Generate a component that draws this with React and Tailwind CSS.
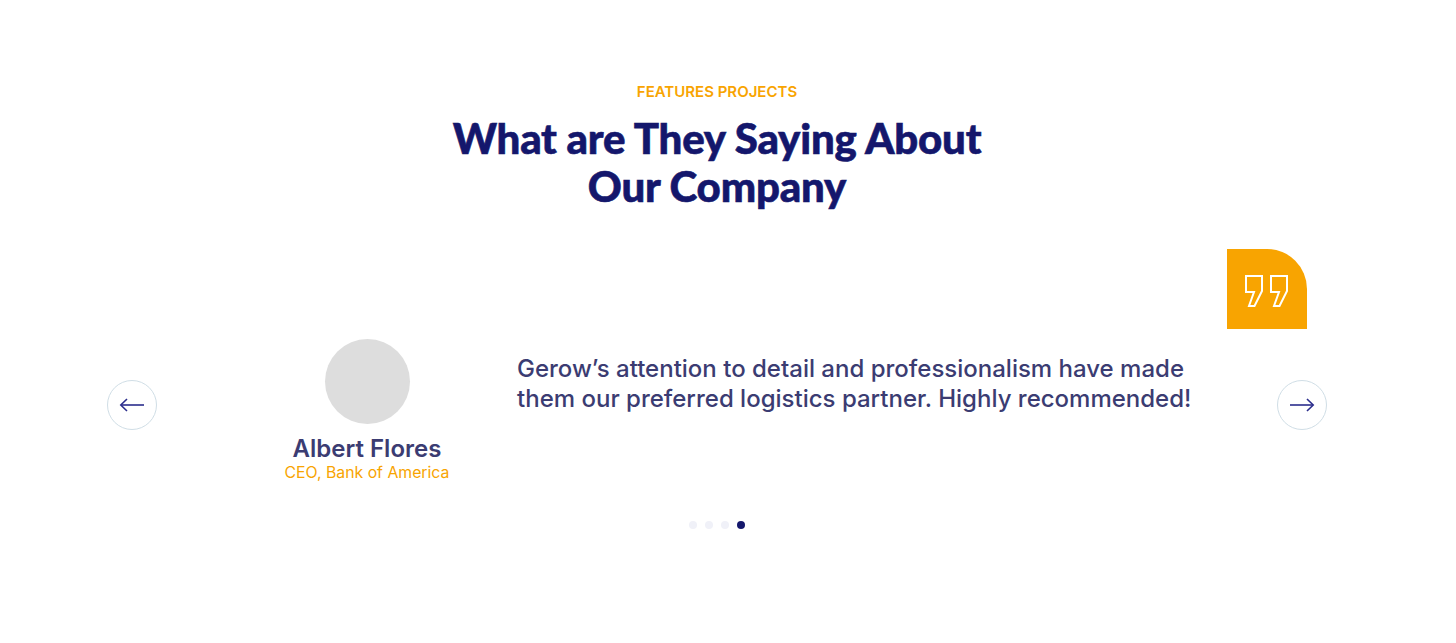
export default function App() {
  const dots = ["bg-[#f0f1f8]", "bg-[#f0f1f8]", "bg-[#f0f1f8]", "bg-[#14176c]"];
  return (
    <div className="h-[643px] w-[1434px] overflow-hidden bg-white pt-[83px] font-['Inter',sans-serif]">
      <div className="flex flex-col items-center">
        <p className="text-[15px] leading-[18px] font-semibold text-[#f8a401]">FEATURES PROJECTS</p>
        <h2 className="mt-[13px] w-[560px] text-center font-['Lato',sans-serif] text-[42px] leading-[48px] font-black tracking-[-0.2px] text-[#14176c] [-webkit-text-stroke:0.6px_#14176c]">
          What are They Saying About
          <br />
          Our Company
        </h2>
      </div>
      <div className="mx-auto mt-[39px] flex w-[1220px] items-start">
        <div className="mt-[131px] flex h-[50px] w-[50px] shrink-0 items-center justify-center rounded-full border border-[#d0dee6]">
          <svg width="26" height="16" viewBox="0 0 26 16" fill="none" stroke="#2b2d8c" strokeWidth="1.6">
            <path d="M25 8H2" />
            <path d="M8 2L1.8 8L8 14" />
          </svg>
        </div>
        <div className="ml-[50px] mt-[90px] flex w-[320px] shrink-0 flex-col items-center">
          <div className="h-[85px] w-[85px] rounded-full bg-[#dddddd]" />
          <p className="mt-[10px] text-[24px] leading-[30px] font-semibold text-[#3b3c72]">Albert Flores</p>
          <p className="text-[15.8px] leading-[18px] text-[#f8a401]">CEO, Bank of America</p>
        </div>
        <p className="-ml-[10px] mt-[105px] w-[700px] shrink-0 text-[24px] leading-[30px] font-medium text-[#3b3c72]">
          Gerow’s attention to detail and professionalism have made them our preferred logistics partner. Highly recommended!
        </p>
        <div className="ml-auto flex flex-col items-end">
          <div className="-ml-[50px] flex h-[80px] w-[80px] items-center justify-center self-start rounded-tr-[40px] bg-[#f8a401] pt-[4px]">
            <svg width="46" height="34" viewBox="0 0 46 34" fill="none" stroke="#ffffff" strokeWidth="2">
              <path d="M2 2H18V17L10.5 32H5L10 18H2Z" />
              <path d="M27 2H43V17L35.5 32H30L35 18H27Z" />
            </svg>
          </div>
          <div className="mt-[51px] flex h-[50px] w-[50px] items-center justify-center rounded-full border border-[#d0dee6]">
            <svg width="26" height="16" viewBox="0 0 26 16" fill="none" stroke="#2b2d8c" strokeWidth="1.6">
              <path d="M1 8H24" />
              <path d="M18 2L24.2 8L18 14" />
            </svg>
          </div>
        </div>
      </div>
      <div className="mt-[39px] flex justify-center gap-[8px]">
        {dots.map((c, i) => (
          <span key={i} className={`h-[8px] w-[8px] rounded-full ${c}`} />
        ))}
      </div>
    </div>
  );
}
